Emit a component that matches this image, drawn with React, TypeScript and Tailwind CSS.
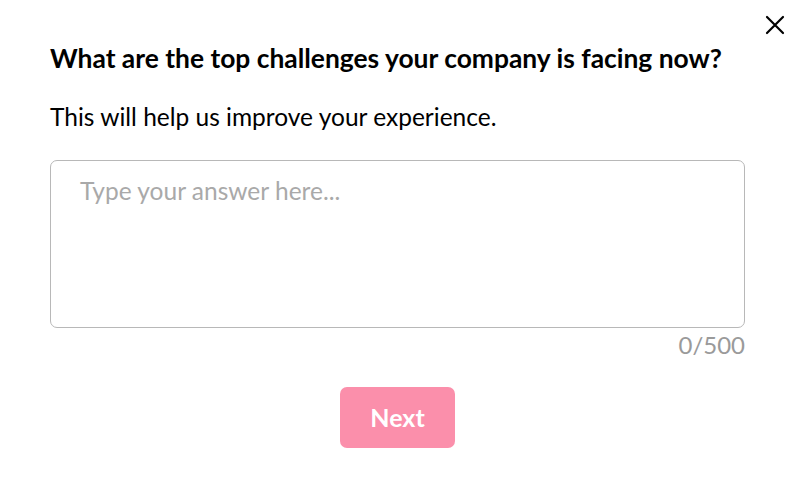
export default function App() {
  return (
    <div className="relative w-[800px] h-[489px] bg-white font-['Lato',sans-serif] text-black">
      <button className="absolute left-[765px] top-[15px] text-black" aria-label="Close">
        <svg width="20" height="20" viewBox="0 0 20 20" fill="none" stroke="currentColor" strokeWidth="2.2" strokeLinecap="round">
          <path d="M2 2 L18 18 M18 2 L2 18" />
        </svg>
      </button>

      <div className="flex flex-col pl-[50px] pr-[55px] pt-[42px]">
        <h1 className="text-[26.4px] leading-[32px] font-bold whitespace-nowrap">
          What are the top challenges your company is facing now?
        </h1>
        <p className="mt-[27px] text-[24.5px] leading-[32px]">
          This will help us improve your experience.
        </p>

        <textarea
          className="mt-[27px] h-[168px] w-full resize-none rounded-[7px] border-[1.5px] border-[#b8b8b8] px-[29px] py-[14px] text-[24.5px] leading-[32px] outline-none placeholder:text-[#a9a9a9]"
          placeholder="Type your answer here..."
        />
        <div className="mt-[2px] text-right text-[24px] leading-[30px] text-[#9a9a9a]">0/500</div>

        <div className="mt-[27px] flex justify-center">
          <button className="h-[61px] w-[115px] rounded-[7px] bg-[#fb8fab] text-[25px] font-bold text-white">
            Next
          </button>
        </div>
      </div>
    </div>
  );
}
